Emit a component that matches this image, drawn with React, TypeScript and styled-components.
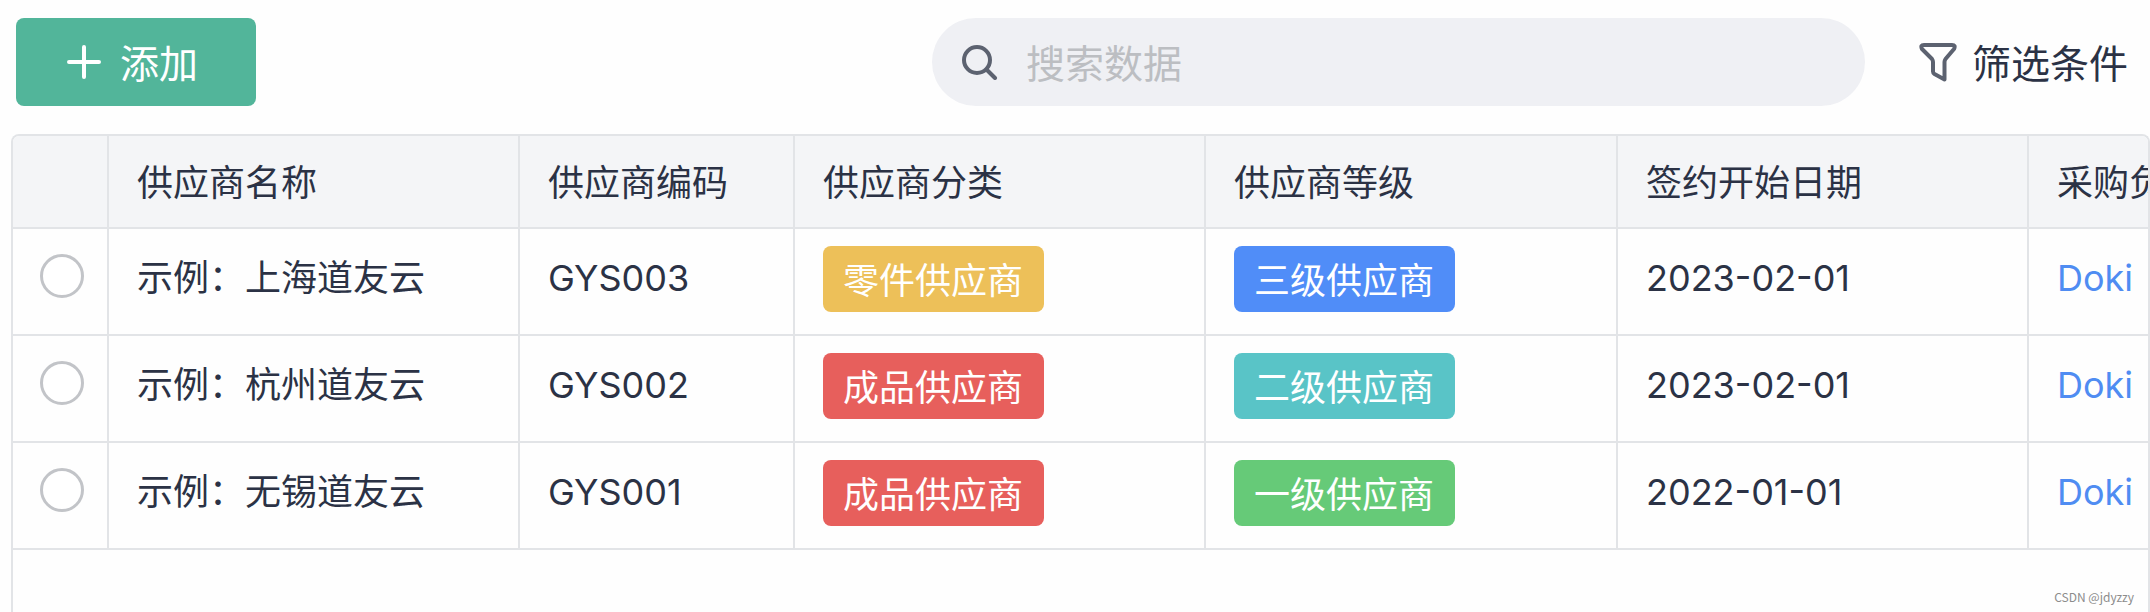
import React from 'react';
import styled, { createGlobalStyle } from 'styled-components';

const GlobalStyle = createGlobalStyle`
  *, *::before, *::after { box-sizing: border-box; }
  body {
    margin: 0;
    background: #fefefe;
    color: #2b3245;
    font-family: Inter, "Noto Sans CJK SC", sans-serif;
  }
  button, input { font: inherit; color: inherit; }
`;

const line = '#e2e4e7';

const Page = styled.main`
  display: flex;
  flex-direction: column;
  min-height: 100vh;
  overflow: hidden;
`;

const Toolbar = styled.header`
  display: flex;
  align-items: center;
  padding: 18px 22px 28px 16px;
  font-size: 39px;
  line-height: 56px;
`;

const AddButton = styled.button`
  display: flex;
  align-items: center;
  justify-content: center;
  gap: 18px;
  flex: none;
  width: 240px;
  height: 88px;
  padding: 0 8px 0 0;
  border: 0;
  border-radius: 8px;
  background: #52b59a;
  color: #fff;
  cursor: pointer;
`;

const Label = styled.span`
  padding-top: 3px;
`;

const SearchBox = styled.label`
  display: flex;
  align-items: center;
  gap: 28px;
  flex: 0 1 933px;
  min-width: 0;
  height: 88px;
  margin-left: auto;
  padding: 0 30px;
  border-radius: 44px;
  background: #eff0f4;
`;

const SearchInput = styled.input`
  flex: 1;
  min-width: 0;
  padding: 3px 0 0;
  border: 0;
  outline: 0;
  background: transparent;

  &::placeholder { color: #bcbec2; opacity: 1; }
`;

const FilterButton = styled.button`
  display: flex;
  align-items: center;
  gap: 15px;
  flex: none;
  margin-left: 54px;
  padding: 0;
  border: 0;
  background: none;
  cursor: pointer;
`;

const Icon = styled.svg`
  flex: none;
  display: block;
  fill: none;
  stroke: currentColor;
  stroke-linecap: round;
  stroke-linejoin: round;
`;

const GreyIcon = styled(Icon)`
  color: #5c6270;
`;

const TableFrame = styled.section`
  flex: 1;
  margin-left: 11px;
  border: 2px solid ${line};
  border-bottom: 0;
  border-radius: 8px 8px 0 0;
  overflow: hidden;
`;

const Table = styled.table`
  table-layout: fixed;
  width: 2427px;
  border-collapse: separate;
  border-spacing: 0;
  font-size: 36px;
  line-height: 52px;
  white-space: nowrap;
`;

const Col = styled.col<{ $w: number }>`
  width: ${(p) => p.$w}px;
`;

const HeadCell = styled.th`
  height: 93px;
  padding: 3px 28px 0;
  border-right: 2px solid ${line};
  border-bottom: 2px solid ${line};
  background: #f4f5f7;
  font-weight: 400;
  text-align: left;
`;

const Cell = styled.td`
  height: 107px;
  padding: 17px 28px 0;
  border-right: 2px solid ${line};
  border-bottom: 2px solid ${line};
  vertical-align: top;
`;

const Text = styled.div`
  display: flex;
  align-items: center;
  height: 64px;
`;

const PickCell = styled(Cell)`
  padding: 25px 0 0 27px;
`;

const Radio = styled.input`
  appearance: none;
  display: block;
  width: 44px;
  height: 44px;
  margin: 0;
  border: 3px solid #c2c4c8;
  border-radius: 50%;
  background: #fff;

  &:checked { border: 12px solid #52b59a; }
`;

const Tag = styled.span<{ $color: string }>`
  display: flex;
  align-items: center;
  width: fit-content;
  height: 66px;
  padding: 3px 21px 0 20px;
  border-radius: 8px;
  background: ${(p) => p.$color};
  color: #fff;
`;

const OwnerLink = styled.a`
  color: #4f8cf2;
  text-decoration: none;
`;

const Watermark = styled.small`
  position: absolute;
  right: 16px;
  bottom: 7px;
  color: #8c8c8c;
  font: 12px/16px "Noto Sans CJK SC", sans-serif;
`;

const columns = [
  { title: '供应商名称', width: 411 },
  { title: '供应商编码', width: 275 },
  { title: '供应商分类', width: 411 },
  { title: '供应商等级', width: 412 },
  { title: '签约开始日期', width: 411 },
  { title: '采购负责人', width: 411 },
];

const suppliers = [
  { name: '示例：上海道友云', code: 'GYS003', kind: '零件供应商', kindColor: '#edc059', level: '三级供应商', levelColor: '#508df8', date: '2023-02-01', owner: 'Doki' },
  { name: '示例：杭州道友云', code: 'GYS002', kind: '成品供应商', kindColor: '#e75f5c', level: '二级供应商', levelColor: '#59c4c7', date: '2023-02-01', owner: 'Doki' },
  { name: '示例：无锡道友云', code: 'GYS001', kind: '成品供应商', kindColor: '#e75f5c', level: '一级供应商', levelColor: '#66ca78', date: '2022-01-01', owner: 'Doki' },
];

export default function App() {
  return (
    <Page>
      <GlobalStyle />
      <Toolbar>
        <AddButton type="button">
          <Icon width="36" height="36" viewBox="0 0 36 36" strokeWidth="4" aria-hidden="true">
            <path d="M18 3v30M3 18h30" />
          </Icon>
          <Label>添加</Label>
        </AddButton>
        <SearchBox>
          <GreyIcon width="36" height="36" viewBox="0 0 36 36" strokeWidth="4" aria-hidden="true">
            <circle cx="15" cy="16" r="13" />
            <path d="M25 26l8 8" />
          </GreyIcon>
          <SearchInput type="search" placeholder="搜索数据" aria-label="搜索数据" />
        </SearchBox>
        <FilterButton type="button">
          <GreyIcon width="38" height="40" viewBox="0 0 38 40" strokeWidth="4" aria-hidden="true">
            <path d="M5 3h28q4 0 2 4l-8.500 10q-1 1.500-1 3v17.500l-10-5.500q-1.500-1-1.500-2.500v-9.500q0-1.500-1-3L3 7Q1 3 5 3z" />
          </GreyIcon>
          <Label>筛选条件</Label>
        </FilterButton>
      </Toolbar>

      <TableFrame>
        <Table>
          <colgroup>
            <Col $w={96} />
            {columns.map((c) => <Col key={c.title} $w={c.width} />)}
          </colgroup>
          <thead>
            <tr>
              <HeadCell as="td" />
              {columns.map((c) => <HeadCell key={c.title} scope="col">{c.title}</HeadCell>)}
            </tr>
          </thead>
          <tbody>
            {suppliers.map((s) => (
              <tr key={s.code}>
                <PickCell><Radio type="radio" name="supplier" value={s.code} aria-label={s.name} /></PickCell>
                <Cell><Text>{s.name}</Text></Cell>
                <Cell><Text>{s.code}</Text></Cell>
                <Cell><Tag $color={s.kindColor}>{s.kind}</Tag></Cell>
                <Cell><Tag $color={s.levelColor}>{s.level}</Tag></Cell>
                <Cell><Text>{s.date}</Text></Cell>
                <Cell><Text><OwnerLink href="#owner">{s.owner}</OwnerLink></Text></Cell>
              </tr>
            ))}
          </tbody>
        </Table>
      </TableFrame>
      <Watermark>CSDN @jdyzzy</Watermark>
    </Page>
  );
}
